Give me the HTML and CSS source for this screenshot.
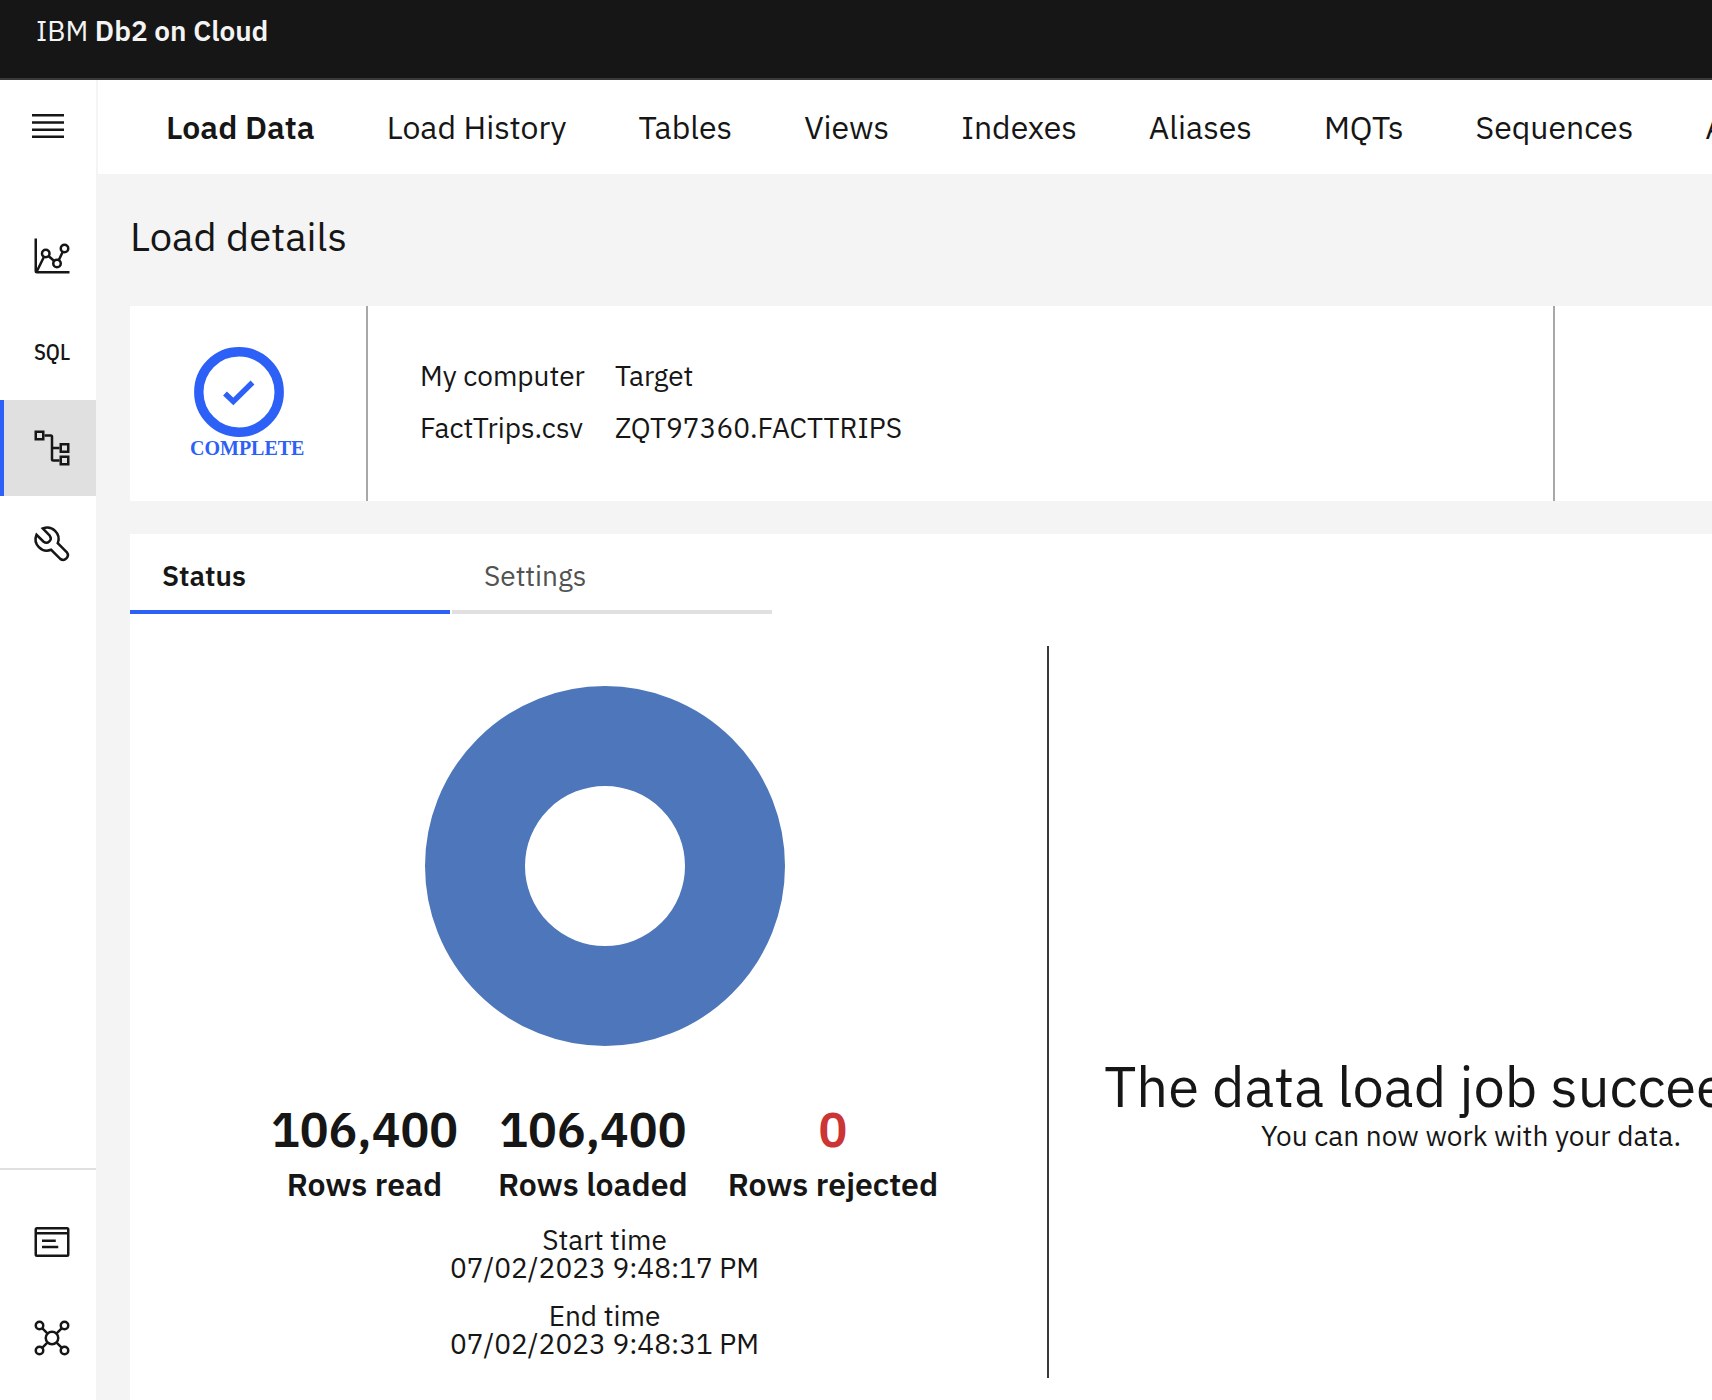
FILE: index.html
```html
<!DOCTYPE html>
<html lang="en">
<head>
<meta charset="utf-8">
<title>IBM Db2 on Cloud</title>
<link rel="stylesheet" href="styles.css">
</head>
<body>
<header class="topbar"><a class="brand" href="#">IBM <strong>Db2 on Cloud</strong></a></header>
<div class="shell">
  <aside class="sidebar">
    <button class="menu-button" type="button" aria-label="Menu">
      <svg width="32" height="24" viewBox="0 0 32 24" fill="currentColor"><path d="M0 0h32v2.4H0zM0 7.3h32v2.4H0zM0 14.5h32v2.4H0zM0 21.6h32V24H0z"/></svg>
    </button>
    <nav class="rail" aria-label="Main">
      <a class="rail-item" href="#" aria-label="Dashboard">
        <svg class="icon" viewBox="0 0 32 32"><path d="M3 2v26a1 1 0 0 0 1 1h26M4 28l5.6-11.4M13.2 16l4.6 4M21.4 19.4l3.2-6.8"/><circle cx="11" cy="14" r="3"/><circle cx="20" cy="22" r="3"/><circle cx="26" cy="10" r="3"/></svg>
      </a>
      <a class="rail-item rail-sql" href="#">SQL</a>
      <a class="rail-item rail-active" href="#" aria-label="Data" aria-current="page">
        <svg class="icon" viewBox="0 0 32 32"><path d="M10 6h5a1 1 0 0 1 1 1v18a1 1 0 0 0 1 1h5M16 16h6"/><path d="M3 3h6v6H3zM23 13h6v6h-6zM23 23h6v6h-6z"/></svg>
      </a>
      <a class="rail-item" href="#" aria-label="Administration">
        <svg class="icon" viewBox="0 0 32 32"><path d="M8.6 3.6A9.1 9.1 0 0 1 20.6 15.3l7.3 7.3a3.8 3.8 0 0 1-5.3 5.3L15.3 20.6A9.1 9.1 0 0 1 3.6 8.6L9.3 14.2A3.5 3.5 0 0 0 14.2 9.3Z"/></svg>
      </a>
    </nav>
    <nav class="rail rail-bottom" aria-label="Resources">
      <a class="rail-item" href="#" aria-label="Documentation">
        <svg class="icon" viewBox="0 0 32 32"><rect x="3" y="5" width="26" height="22" rx="1"/><path d="M3 9h26M8 15h11M8 20h13"/></svg>
      </a>
      <a class="rail-item" href="#" aria-label="Connections">
        <svg class="icon" viewBox="0 0 32 32"><circle cx="16" cy="16" r="5"/><circle cx="6" cy="6" r="3"/><circle cx="26" cy="6" r="3"/><circle cx="6" cy="26" r="3"/><circle cx="26" cy="26" r="3"/><path d="M8.1 8.1l4.4 4.4M23.9 8.1l-4.4 4.4M8.1 23.9l4.4-4.4M23.9 23.9l-4.4-4.4"/></svg>
      </a>
    </nav>
  </aside>
  <div class="content">
    <nav class="subnav" aria-label="Data">
      <a class="subnav-current" href="#">Load Data</a>
      <a href="#">Load History</a>
      <a href="#">Tables</a>
      <a href="#">Views</a>
      <a href="#">Indexes</a>
      <a href="#">Aliases</a>
      <a href="#">MQTs</a>
      <a href="#">Sequences</a>
      <a href="#">Application objects</a>
    </nav>
    <main class="page">
      <h1 class="title">Load details</h1>
      <section class="summary">
        <div class="badge">
          <svg class="badge-ring" viewBox="0 0 90 90"><circle cx="45" cy="45" r="40.2" stroke-width="9.4"/><path d="M31 46.5l8.3 8L58.5 35.5" stroke-width="5.5"/></svg>
          <span>COMPLETE</span>
        </div>
        <div class="files-cell">
          <table class="files">
            <thead><tr><th scope="col">My computer</th><th scope="col">Target</th></tr></thead>
            <tbody><tr><td>FactTrips.csv</td><td>ZQT97360.FACTTRIPS</td></tr></tbody>
          </table>
        </div>
      </section>
      <section class="details">
        <div class="tabs" role="tablist">
          <button class="tab tab-selected" type="button" role="tab" aria-selected="true">Status</button>
          <button class="tab" type="button" role="tab" aria-selected="false">Settings</button>
        </div>
        <div class="panels">
          <div class="progress">
            <svg class="donut" viewBox="0 0 360 360" role="img" aria-label="All rows loaded"><circle cx="180" cy="180" r="130" stroke-width="100"/></svg>
            <dl class="stats">
              <div><dd>106,400</dd><dt>Rows read</dt></div>
              <div><dd>106,400</dd><dt>Rows loaded</dt></div>
              <div><dd class="rejected">0</dd><dt>Rows rejected</dt></div>
            </dl>
            <p class="time">Start time<br>07/02/2023 9:48:17 PM</p>
            <p class="time">End time<br>07/02/2023 9:48:31 PM</p>
          </div>
          <div class="outcome">
            <h2>The data load job succeeded.</h2>
            <p>You can now work with your data.</p>
          </div>
        </div>
      </section>
    </main>
  </div>
</div>
</body>
</html>
```
FILE: styles.css
```css
* { box-sizing: border-box; }

body {
  margin: 0;
  min-height: 100vh;
  display: flex;
  flex-direction: column;
  overflow: hidden;
  background: #f4f4f4;
  color: #161616;
  font-family: "IBM Plex Sans", Roboto, sans-serif;
  font-size: 28px;
  line-height: 36px;
}

a { color: inherit; text-decoration: none; }
button { font: inherit; color: inherit; border: 0; background: none; padding: 0; }
h1, h2, p, dl, dd { margin: 0; font-weight: 400; }

.topbar {
  height: 80px;
  padding: 13px 36px;
  background: #161616;
  border-bottom: 2px solid #393939;
  color: #f4f4f4;
}
.brand strong { font-weight: 600; }

.shell { flex: 1; display: flex; }

.sidebar {
  flex: 0 0 96px;
  margin-right: 2px;
  display: flex;
  flex-direction: column;
  background: #fff;
}
.menu-button { height: 92px; padding-left: 32px; display: flex; align-items: center; }
.rail { display: flex; flex-direction: column; padding-top: 36px; }
.rail-item {
  height: 96px;
  padding-left: 28px;
  border-left: 4px solid transparent;
  display: flex;
  align-items: center;
}
.rail-active { background: #e0e0e0; border-color: #2c60f6; }
.rail-sql {
  padding-left: 30px;
  font-family: "IBM Plex Sans Condensed", "Liberation Sans Narrow", "IBM Plex Mono", "DejaVu Sans Mono", monospace;
  font-size: 22px;
  font-weight: 500;
}
.rail-bottom {
  margin-top: auto;
  padding: 24px 0 14px;
  border-top: 2px solid #e0e0e0;
}
.icon { width: 40px; height: 40px; fill: none; stroke: currentColor; stroke-width: 2; }

.content { flex: 1; min-width: 0; display: flex; flex-direction: column; }
.subnav {
  height: 94px;
  padding-left: 68px;
  display: flex;
  align-items: center;
  gap: 72px;
  background: #fff;
  font-size: 32px;
  white-space: nowrap;
  overflow: hidden;
}
.subnav-current { font-weight: 600; }

.page { flex: 1; padding: 38px 0 0 32px; display: flex; flex-direction: column; }
.title { font-size: 40px; line-height: 48px; margin-bottom: 46px; }

.summary { display: flex; min-height: 195px; background: #fff; margin-bottom: 33px; }
.badge {
  flex: 0 0 238px;
  padding: 41px 0 0 60px;
  border-right: 2px solid #a8a8a8;
  color: #2c60f6;
  font: bold 20px/22px "Liberation Serif", serif;
}
.badge-ring { display: block; width: 90px; height: 90px; margin-left: 4px; fill: none; stroke: currentColor; }
.files-cell {
  flex: 0 1 1187px;
  padding: 44px 52px;
  border-right: 2px solid #a8a8a8;
}
.files { border-collapse: collapse; line-height: 52px; white-space: nowrap; }
.files th, .files td { padding: 0 30px 0 0; font-weight: 400; text-align: left; }

.details { flex: 1; background: #fff; }
.tabs { display: flex; gap: 2px; }
.tab {
  width: 320px;
  height: 80px;
  padding: 8px 0 0 32px;
  border-bottom: 4px solid #e0e0e0;
  text-align: left;
  color: #525252;
}
.tab-selected { border-color: #2c60f6; color: #161616; font-weight: 600; }

.panels { display: flex; padding: 32px 0 22px 32px; }
.progress {
  flex: 0 0 887px;
  padding-top: 40px;
  border-right: 2px solid #393939;
  display: flex;
  flex-direction: column;
  align-items: center;
  text-align: center;
}
.donut { width: 360px; height: 360px; fill: none; stroke: #4d77ba; }
.stats { display: flex; gap: 40px; margin: 55px 0 15px; }
.stats div { display: flex; flex-direction: column; align-items: center; }
.stats dd { font-size: 48px; line-height: 56px; font-weight: 600; }
.stats dt { font-size: 32px; line-height: 54px; font-weight: 600; }
.stats .rejected { color: #cb3535; }
.time { line-height: 28px; margin-bottom: 20px; }

.outcome { flex: 0 0 844px; padding-top: 408px; text-align: center; }
.outcome h2 { font-size: 56px; line-height: 64px; white-space: nowrap; }
.outcome p { line-height: 36px; }
```
